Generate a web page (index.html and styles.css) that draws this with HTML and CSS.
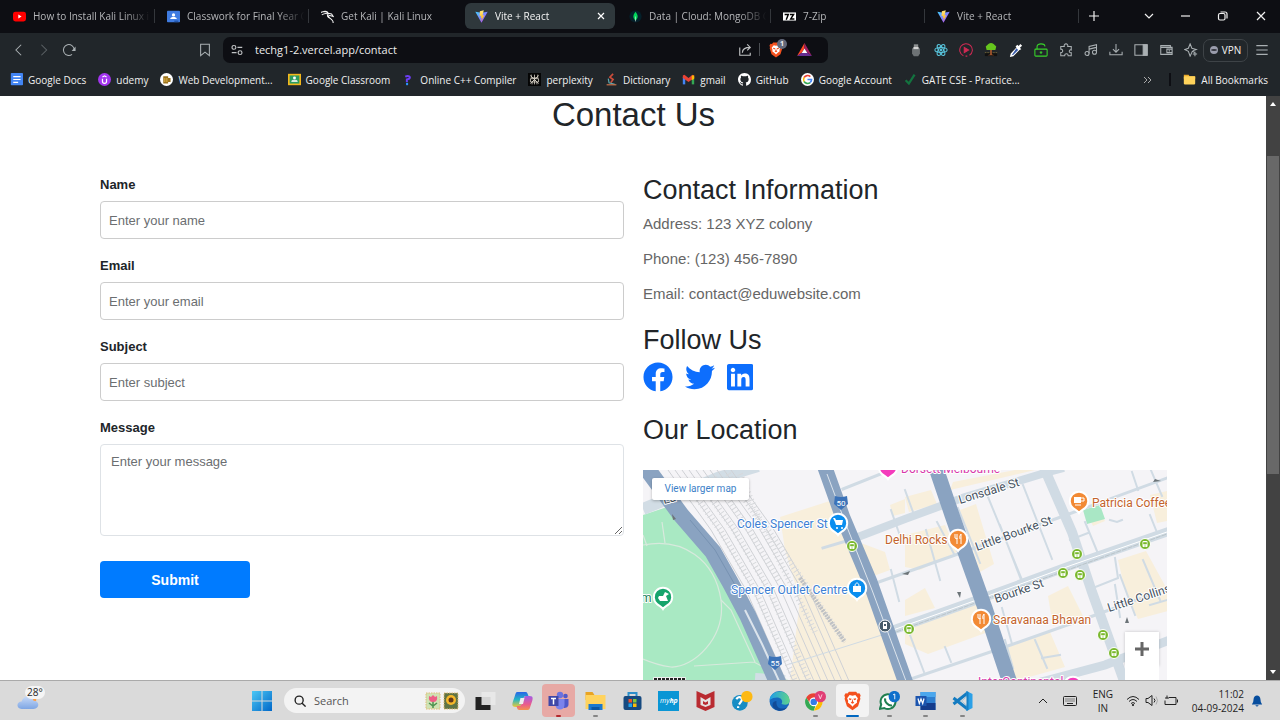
FILE: index.html
```html
<!DOCTYPE html>
<html lang="en">
<head>
<meta charset="utf-8">
<meta name="viewport" content="width=device-width, initial-scale=1">
<title>Contact Us</title>
<link rel="stylesheet" href="styles.css">
</head>
<body>
<svg class="defs" aria-hidden="true">
  <defs>
    <linearGradient id="vite-a" x1="0" y1="0" x2="1" y2="1"><stop offset="0" stop-color="#41d1ff"/><stop offset="1" stop-color="#bd34fe"/></linearGradient>
    <linearGradient id="vite-b" x1="0" y1="0" x2="0" y2="1"><stop offset="0" stop-color="#ffea83"/><stop offset="1" stop-color="#ffa800"/></linearGradient>
    <linearGradient id="win" x1="0" y1="0" x2="1" y2="1"><stop offset="0" stop-color="#4cc8f5"/><stop offset="1" stop-color="#0067c8"/></linearGradient>
    <linearGradient id="edge-a" x1="0" y1="0" x2="1" y2="0"><stop offset="0" stop-color="#1e9de8"/><stop offset="1" stop-color="#5fd38a"/></linearGradient>
    <linearGradient id="cloud" x1="0" y1="0" x2="0" y2="1"><stop offset="0" stop-color="#c9dbf8"/><stop offset="1" stop-color="#7ea6e4"/></linearGradient>
    <linearGradient id="cop-a" x1="0" y1="0" x2="0" y2="1"><stop offset="0" stop-color="#2764e8"/><stop offset=".5" stop-color="#25b6c4"/><stop offset="1" stop-color="#ecc936"/></linearGradient>
    <linearGradient id="cop-b" x1="0" y1="0" x2="0" y2="1"><stop offset="0" stop-color="#a45be6"/><stop offset=".6" stop-color="#ea5b8c"/><stop offset="1" stop-color="#f4914e"/></linearGradient>
    <symbol id="vite" viewBox="0 0 16 16"><path fill="url(#vite-a)" d="M.4 2.2 8 15.6 15.6 2.2 8.2 3.4z"/><path fill="url(#vite-b)" d="M10.8.4 6 1.4 5.6 7.6l2-.4-.6 2.6 1.5-.4-1 4.6 4-7.6-2.2.4z"/></symbol>
    <symbol id="brave" viewBox="0 0 24 28"><path fill="#f4511e" d="M7 1h10l2 2.400 2.600-.2L23.400 6l-.9 3 .6 2-3.300 10.400L12 27 4.200 21.400.9 11l.6-2-.9-3 1.800-2.800 2.600.2z"/><path fill="#fff" d="m12 6.500 4-1 3.500 4.500-1.500 4 .5 2-4.500 3.500L12 22l-2-2.500L5.500 16l.5-2-1.500-4L8 5.500z"/><path fill="#f4511e" d="m7 10 4 1-1.500 2L7 12zm10 0-4 1 1.500 2 2.500-1zM12 11l1 4 1.500 1.500L12 18l-2.500-1.500L11 15z"/></symbol>
    <symbol id="tram" viewBox="-6 -6 12 12"><circle r="5.500" fill="#7ab82e" stroke="#fff"/><rect x="-2.500" y="-3" width="5" height="6" rx="1" fill="#fff"/><path d="M-1.500-1.500h3v1.500h-3zM-1 2h2" fill="#7ab82e" stroke="#7ab82e" stroke-width=".6"/></symbol>
    <path id="pin" d="M0 12C-1.500 9.500-4 9-6 7A9.200 9.200 0 1 1 6 7C4 9 1.500 9.500 0 12z"/>
  </defs>
</svg>

<header class="browser">
  <div class="tabs">
    <button class="tab"><svg class="fav" viewBox="0 0 16 16"><rect y="2" width="16" height="12" rx="3" fill="#f00"/><path fill="#fff" d="m6.500 5.500 4 2.500-4 2.500z"/></svg><span>How to Install Kali Linux in</span></button>
    <button class="tab"><svg class="fav" viewBox="0 0 16 16"><rect y="1" width="16" height="14" rx="1" fill="#3f7be0"/><circle cx="8" cy="6" r="2" fill="#fff"/><path fill="#fff" d="M4 11c0-3 8-3 8 0z"/><path fill="#2457ac" d="M9 13h5v2H9z"/></svg><span>Classwork for Final Year C</span></button>
    <button class="tab last-before"><svg class="fav" viewBox="0 0 16 16" fill="none" stroke="#f4f4f4" stroke-width="1.300"><path d="M0 3c4-2 7-1 9 1M1 6c3-2 6-2 8-1M3 2c3-1 5 0 6 2l4 1 2 3-3-1c-3-1-4 1-1 3s4 3 4 6M9 5c-2 2-1 4 2 5"/></svg><span>Get Kali | Kali Linux</span></button>
    <button class="tab active"><svg class="fav"><use href="#vite"/></svg><span>Vite + React</span><svg class="tab-close" viewBox="0 0 8 8"><path d="m1 1 6 6M7 1 1 7"/></svg></button>
    <button class="tab"><svg class="fav" viewBox="0 0 16 16"><circle cx="8" cy="8" r="7.500" fill="#04202a"/><path fill="#00d65b" d="M8 2c4 5 3 8 0 11-3-3-4-6 0-11z"/><path stroke="#eee" stroke-width=".7" d="M8 8v6"/></svg><span>Data | Cloud: MongoDB C</span></button>
    <button class="tab"><svg class="fav" viewBox="0 0 16 16"><path fill="#fff" d="M0 3h16v10H0z"/><path fill="none" stroke="#000" stroke-width="1.800" d="M2 5.500h4.500L4 12M8.500 5.500H13L9.500 11H14"/></svg><span>7-Zip</span></button>
    <button class="tab"><svg class="fav"><use href="#vite"/></svg><span>Vite + React</span></button>
    <button class="wbtn plus" aria-label="New tab"><svg viewBox="0 0 12 12"><path d="M6 1v10M1 6h10"/></svg></button>
    <div class="window-buttons">
      <button class="wbtn caret" aria-label="Search tabs"><svg viewBox="0 0 12 12"><path d="m2 4 4 4 4-4"/></svg></button>
      <button class="wbtn" aria-label="Minimize"><svg viewBox="0 0 12 12"><path d="M2 6h9"/></svg></button>
      <button class="wbtn" aria-label="Restore"><svg viewBox="0 0 12 12"><rect x="1.500" y="3.500" width="6.500" height="6.500" rx="1.500"/><path d="M3.500 2H8q2 0 2 2v4.500"/></svg></button>
      <button class="wbtn" aria-label="Close"><svg viewBox="0 0 12 12"><path d="m2 2 8 8M10 2l-8 8"/></svg></button>
    </div>
  </div>

  <div class="toolbar">
    <nav class="nav">
      <button class="tool" aria-label="Back"><svg viewBox="0 0 16 16"><path d="M10.500 2 4.500 8l6 6"/></svg></button>
      <button class="tool dim" aria-label="Forward"><svg viewBox="0 0 16 16"><path d="m5 2 6 6-6 6"/></svg></button>
      <button class="tool" aria-label="Reload"><svg viewBox="0 0 16 16"><path d="M11.500 13A6.200 6.200 0 1 1 14 7.500"/><path fill="currentColor" d="M15.500 4v5H11z" stroke="none"/></svg></button>
    </nav>
    <button class="tool" aria-label="Bookmark"><svg viewBox="0 0 16 16"><path d="M3 1.500h10v13L8 10.500l-5 4z"/></svg></button>
    <div class="address">
      <svg class="site" viewBox="0 0 16 16"><circle cx="4.500" cy="5" r="2.200"/><circle cx="11.500" cy="11" r="2.200"/><path d="M8.500 5H14M2 11h5.500"/></svg>
      <input aria-label="Address" value="techg1-2.vercel.app/contact">
      <svg class="share" viewBox="0 0 16 16"><path d="M2 5v9h12v-3M5 11c0-4 3-6 9-6M10.500 1.500 14 5l-3.500 3.500"/></svg>
      <i class="bar"></i>
      <span class="shield"><svg><use href="#brave"/></svg><b>1</b></span>
      <svg class="bat" viewBox="0 0 16 14"><path fill="#ff4724" d="M8 0v6l-3 4.500L0 14z"/><path fill="#9e1f63" d="m8 0 8 14-5-3.500L8 6z"/><path fill="#662d91" d="M0 14h16l-5-3.500H5z"/><path fill="#fff" d="m8 6 3 4.700H5z"/></svg>
    </div>
    <div class="extensions">
      <button class="tool" aria-label="Extension"><svg viewBox="0 0 16 16" stroke="none"><path fill="#8d9092" d="M5.500 1.500h5v3h-5z"/><path fill="#6d7275" d="M3.500 6h9v6l-2 3h-5l-2-3z"/><path fill="#d4d4d4" d="M5 4.500h6V7H5z"/></svg></button>
      <button class="tool" aria-label="React tools"><svg viewBox="0 0 16 16" stroke="#58c4dc"><g><ellipse cx="8" cy="8" rx="7" ry="2.800"/><ellipse cx="8" cy="8" rx="7" ry="2.800" transform="rotate(60 8 8)"/><ellipse cx="8" cy="8" rx="7" ry="2.800" transform="rotate(120 8 8)"/></g><circle cx="8" cy="8" r="1" fill="#58c4dc"/></svg></button>
      <button class="tool" aria-label="Video speed"><svg viewBox="0 0 16 16" stroke="#cf2a53"><path d="M5 14.500A7.200 7.200 0 1 1 12 14"/><path fill="#cf2a53" d="m6 5 5 3-5 3zM7.500 15h2"/></svg></button>
      <button class="tool" aria-label="Forest"><svg viewBox="0 0 16 16" stroke="none"><path fill="#111" d="M1 11h14v4H1z"/><path fill="#a4572c" d="M7 8h2v5l3 1H4l3-1z"/><path fill="#65c51d" d="M5 1q3-2 6 0l3 3-1 4H3L2 4z"/><path stroke="#b9a04f" stroke-width=".8" stroke-dasharray="1 1" d="M1 11h5m4 0h5"/></svg></button>
      <button class="tool" aria-label="Colour picker"><svg viewBox="0 0 16 16" stroke="none"><path fill="#fff" d="M9.500 2 11 3.500 13 1l2 2-2.500 2.500L14 7l-2 1L5 15l-4 1 1-4 6.500-7L7.500 4z"/><path fill="#3558a8" d="m8.500 6 2 2L5 13.500 3 14z"/></svg></button>
      <button class="tool" aria-label="Unlock"><svg viewBox="0 0 16 16" stroke="#38d42a" stroke-width="1.700"><rect x="1" y="7" width="14" height="8" rx="1"/><path d="M3.500 7V4c0-4 9-4 9 0M8 9.500v3M6.500 10.500h3"/></svg></button>
      <button class="tool" aria-label="Extensions"><svg viewBox="0 0 16 16"><path d="M2 4h4c-1-4 5-4 4 0h4v4c-3-1-3 4 0 3v3.500h-3.500c0-3-4-3-4 0H2V11c3 0 3-4 0-4z"/></svg></button>
      <button class="tool" aria-label="Media"><svg viewBox="0 0 16 16"><circle cx="3.500" cy="12" r="2.300"/><circle cx="12" cy="10.500" r="2.300"/><path d="M5.800 12V4l8.500-2v8.500M6 7l8-2"/></svg></button>
      <button class="tool" aria-label="Downloads"><svg viewBox="0 0 16 16"><path d="M8 1v9M4.500 7 8 10.500 11.500 7M1 10v3.500h14V10"/></svg></button>
      <button class="tool" aria-label="Sidebar"><svg viewBox="0 0 16 16"><path d="M1 2h14v12H1z"/><path fill="#aab0b3" d="M10.500 2H15v12h-4.500z"/></svg></button>
      <button class="tool" aria-label="Wallet"><svg viewBox="0 0 16 16"><path d="M13 5V3H2v10h13V5H2M15 7H9v4h6M11 9h1.500"/></svg></button>
      <button class="tool" aria-label="Leo"><svg viewBox="0 0 16 16"><path d="M12 10.500 9.500 9.500 7 15l-2-5.500L1 7.500 5 6l2-5 2 5 5 1.500-4 1.500M12.500 10v5M10 12.500h5"/></svg></button>
    </div>
    <button class="vpn"><i></i>VPN</button>
    <button class="tool menu" aria-label="Menu"><svg viewBox="0 0 16 16"><path d="M1.500 3h13M1.500 8h13M1.500 13h13"/></svg></button>
  </div>

  <nav class="bookmarks">
    <a href="#"><svg viewBox="0 0 16 16"><rect x="1" width="15" height="15" rx="1" fill="#4285f4"/><path stroke="#fff" stroke-width="1.500" d="M4 4.500h9M4 8h9M4 11.500h6"/></svg>Google Docs</a>
    <a href="#"><svg viewBox="0 0 16 16"><circle cx="8" cy="8" r="8" fill="#a435f0"/><path fill="none" stroke="#fff" stroke-width="1.500" d="M5.500 7v3.500c0 3 5 3 5 0V7M5.500 5 8 3.500 10.500 5"/></svg>udemy</a>
    <a href="#"><svg viewBox="0 0 16 16"><circle cx="8" cy="8" r="8" fill="#fff"/><path fill="#9b721d" d="M4 4h6v9H4zM10 6h3v5h-3z"/><path fill="#f0c75b" d="M5.500 6h1v5h-1zm2.500 0h1v5H8z"/></svg>Web Development...</a>
    <a href="#" class="room"><svg viewBox="0 0 16 16"><path fill="#f4b81c" d="M0 1h16v14H0z"/><path fill="#2c9c61" d="M2 3h12v10H2z"/><circle cx="8" cy="6" r="1.800" fill="#fff"/><path fill="#d6eddd" d="M4 11c0-4 8-4 8 0z"/></svg>Google Classroom</a>
    <a href="#"><svg viewBox="0 0 16 16"><path fill="none" stroke="#6d3df5" stroke-width="2.500" d="M4 4.500c4-2 7 0 5 2.500L6 8v3"/><path fill="#2b94ff" d="M5 12h2.500v3H5z"/></svg>Online C++ Compiler</a>
    <a href="#"><svg viewBox="0 0 16 16"><path fill="#050505" d="M0 0h16v16H0z"/><path fill="none" stroke="#d8d2c6" d="M8 2v12M3 3l10 10M13 3 3 13M4 2v4h8V2M3 7h10v4H3zM5 14v-3l3-3 3 3v3"/></svg>perplexity</a>
    <a href="#"><svg viewBox="0 0 16 16" fill="none"><path stroke="#cd4d3b" stroke-width="2" d="m10 1-4 4 4 3-3 4"/><path stroke="#5fa7ae" stroke-width="1.500" d="m4 7 1 5 7 2"/><path stroke="#c8704a" stroke-width="1.500" d="M2 14.500h12"/></svg>Dictionary</a>
    <a href="#"><svg viewBox="0 0 16 16"><path fill="#4285f4" d="M1 5h3v9H1z"/><path fill="#34a853" d="M12 5h3v9h-3z"/><path fill="#ea4335" d="m1 3 2-1 5 4 5-4 2 1v3l-7 5-7-5z"/><path fill="#fbbc04" d="M12 3h3v4l-3 2z"/></svg>gmail</a>
    <a href="#"><svg viewBox="0 0 16 16"><path fill="#fff" d="M8 0C3.580 0 0 3.580 0 8c0 3.540 2.290 6.530 5.470 7.590.4.07.55-.17.55-.38 0-.19-.01-.82-.01-1.490-2.010.37-2.530-.49-2.690-.94-.09-.23-.48-.94-.82-1.130-.28-.15-.68-.52-.01-.53.63-.01 1.080.58 1.230.82.72 1.210 1.870.87 2.330.66.07-.52.28-.87.51-1.070-1.780-.2-3.640-.89-3.640-3.950 0-.87.31-1.590.82-2.150-.08-.2-.36-1.020.08-2.120 0 0 .67-.21 2.200.82.64-.18 1.320-.27 2-.27s1.360.09 2 .27c1.530-1.040 2.200-.82 2.200-.82.44 1.100.16 1.920.08 2.120.51.56.82 1.270.82 2.150 0 3.070-1.870 3.750-3.650 3.950.29.25.54.73.54 1.480 0 1.070-.01 1.930-.01 2.200 0 .21.15.46.55.38A8.010 8.010 0 0 0 16 8c0-4.420-3.580-8-8-8z"/></svg>GitHub</a>
    <a href="#"><svg viewBox="0 0 16 16"><circle cx="8" cy="8" r="8" fill="#fff"/><g fill="none" stroke-width="2"><path stroke="#ea4335" d="M3.800 5.500A5 5 0 0 1 11.500 4.500"/><path stroke="#fbbc04" d="M3.800 5.500a5 5 0 0 0 0 5"/><path stroke="#34a853" d="M3.800 10.500a5 5 0 0 0 7.500 1.200"/><path stroke="#4285f4" d="M11.300 11.700A5 5 0 0 0 13 8H8"/></g></svg>Google Account</a>
    <a href="#"><svg viewBox="0 0 16 16"><path fill="none" stroke="#13733f" stroke-width="2.800" d="m2 9 4 4 7-11"/></svg>GATE CSE - Practice...</a>
    <button class="more" aria-label="More bookmarks"><svg viewBox="0 0 10 10"><path d="m1 2 3 3-3 3M5 2l3 3-3 3"/></svg></button>
    <i class="split"></i>
    <a href="#" class="all"><svg viewBox="0 0 16 16"><path fill="#e9a92a" d="M1 2h6l1 2h7v3H1z"/><rect x="1" y="4" width="14" height="10" rx="1" fill="#ffd35b"/></svg>All Bookmarks</a>
  </nav>
</header>

<div class="viewport">
  <main class="page">
    <h1>Contact Us</h1>
    <div class="columns">
      <form class="form">
        <div class="field"><label for="name">Name</label><input id="name" type="text" placeholder="Enter your name"></div>
        <div class="field"><label for="email">Email</label><input id="email" type="email" placeholder="Enter your email"></div>
        <div class="field"><label for="subject">Subject</label><input id="subject" type="text" placeholder="Enter subject"></div>
        <div class="field"><label for="message">Message</label><textarea id="message" placeholder="Enter your message"></textarea></div>
        <button class="submit" type="button">Submit</button>
      </form>
      <section class="info">
        <h2>Contact Information</h2>
        <p>Address: 123 XYZ colony</p>
        <p>Phone: (123) 456-7890</p>
        <p>Email: contact@eduwebsite.com</p>
        <h2 class="follow">Follow Us</h2>
        <div class="social">
          <a href="#" aria-label="Facebook"><svg viewBox="0 0 512 512"><path d="M504 256C504 119 393 8 256 8S8 119 8 256c0 123.780 90.690 226.380 209.250 245V327.690h-63V256h63v-54.640c0-62.150 37-96.480 93.670-96.480 27.140 0 55.520 4.840 55.520 4.840v61h-31.280c-30.800 0-40.410 19.120-40.410 38.730V256h68.780l-11 71.690h-57.780V501C413.310 482.380 504 379.780 504 256z"/></svg></a>
          <a href="#" aria-label="Twitter"><svg viewBox="0 0 512 512"><path d="M459.370 151.716c.325 4.548.325 9.097.325 13.645 0 138.720-105.583 298.558-298.558 298.558-59.452 0-114.680-17.219-161.137-47.106 8.447.974 16.568 1.299 25.340 1.299 49.055 0 94.213-16.568 130.274-44.832-46.132-.975-84.792-31.188-98.112-72.772 6.498.974 12.995 1.624 19.818 1.624 9.421 0 18.843-1.300 27.614-3.573-48.081-9.747-84.143-51.980-84.143-102.985v-1.299c13.969 7.797 30.214 12.670 47.431 13.319-28.264-18.843-46.781-51.005-46.781-87.391 0-19.492 5.197-37.360 14.294-52.954 51.655 63.675 129.300 105.258 216.365 109.807-1.624-7.797-2.599-15.918-2.599-24.040 0-57.828 46.782-104.934 104.934-104.934 30.213 0 57.502 12.670 76.670 33.137 23.715-4.548 46.456-13.320 66.599-25.340-7.798 24.366-24.366 44.833-46.132 57.827 21.117-2.273 41.584-8.122 60.426-16.243-14.292 20.791-32.161 39.308-52.628 54.253z"/></svg></a>
          <a href="#" aria-label="LinkedIn"><svg viewBox="0 0 448 512"><path d="M416 32H31.900C14.300 32 0 46.500 0 64.300v383.400C0 465.500 14.300 480 31.900 480H416c17.600 0 32-14.500 32-32.300V64.300c0-17.800-14.400-32.300-32-32.300zM135.400 416H69V202.200h66.500V416zm-33.200-243c-21.300 0-38.500-17.300-38.500-38.500S80.900 96 102.200 96c21.200 0 38.500 17.300 38.500 38.500 0 21.300-17.200 38.500-38.500 38.500zm282.100 243h-66.400V312c0-24.800-.5-56.700-34.500-56.700-34.600 0-39.900 27-39.900 54.900V416h-66.400V202.200h63.700v29.200h.9c8.900-16.800 30.600-34.500 62.900-34.500 67.200 0 79.700 44.300 79.700 101.900V416z"/></svg></a>
        </div>
        <h2>Our Location</h2>
        <div class="map">
          <svg class="map-art" viewBox="643 470 524 211" preserveAspectRatio="xMinYMin slice">
            <path fill="#f5f4f7" d="M643 470h524v211H643z"/>
            <g fill="#f8efdc">
              <path d="M780 517 836 499 880 620 905 681H790L800 600 785 550z"/>
              <path d="M853 540 885 552 890 570 868 578zM890 505l15-6v14l-12 3zM905 497l26-7 6 14-28 8zM905 535l40-10 12 27-37 18-15-3z"/>
              <path d="M905 600l20-12 10 20-30 8zM905 630l75-28 8 30-60 22-23-10z"/>
              <path d="M950 490l85-20h-20l-62 12zM960 510l16-6 18 60-14 8zM1085 510l12-5 8 16-12 5zM1048 596l20-10 15 30-30 10zM1000 650l50-18 15 35-50 14zM1118 560l28-9 22 40v20l-30 8-12-25zM1150 495l17-4v30l-10 2z"/>
            </g>
            <path fill="#a9e9c3" d="m643 515 30-10 30 43 25 42 20 36 20 55H643z"/>
            <path fill="#a9e7c5" d="m1083 510 17-5 5 14-18 5z"/>
            <g fill="none" stroke="#d8e9dd" stroke-width="1.200"><path d="M643 545c40-8 72 15 78 55 5 38-28 68-50 67q-14-2-28-8"/><path d="m662 522 3 21m56 57 10 10 24 52m-61 4 60-4 35 19M643 535l4 11"/></g>
            <g fill="none" stroke="#d2dde5" stroke-width="12"><path d="m643 509 75-31 40-12M785 681l-30-2"/></g>
            <g class="rails">
              <path id="rail" d="m668 470 43 60 35 60 40 91"/>
              <use href="#rail" x="7"/><use href="#rail" x="14"/><use href="#rail" x="21"/><use href="#rail" x="28"/><use href="#rail" x="35"/><use href="#rail" x="42"/><use href="#rail" x="49"/><use href="#rail" x="56"/><use href="#rail" x="63"/>
            </g>
            <g class="ties"><path d="m684 480 36 50 35 60 40 91M698 480l36 50 35 60 40 91M714 478l36 54 30 50M728 474l32 48 30 60 25 50M740 474l18 42 28 40 58 85"/></g>
            <path fill="none" stroke="#bfc1c4" stroke-width="4" stroke-dasharray="2 1" d="m800 578 45 64"/>
            <g fill="none" stroke="#d0dbe4" stroke-linecap="square">
              <path stroke-width="8" d="m850 540 55-21 60-22 80-24 15-4"/><path stroke-width="3" d="m823 548 40-12M843 489l45-18M876 583l82-29 100-36 109-40"/>
              <path stroke-width="9" d="m893 630 95-34 84-31 95-33"/><path stroke-width="1" d="m790 664 95-30"/>
              <path stroke-width="3" d="m905 681 100-34 85-30 77-28"/><path stroke-width="9" d="m1045 681 60-16 62-24"/>
              <path stroke-width="10" d="m1045 470 27 62 20 60 32 89"/>
              <path stroke-width="2" d="m988 497 34 83M1023 485l29 74M1000 525l23 60M905 490l8 22M937 522l17 32M926 530l14 50M958 508l22 55M1005 640l8 28M1035 640l12 28M945 647l6 15M910 635l14 37M1085 522l14 34M1115 585l5 32M1143 560l17 40M1132 472l6 18M1150 468l12 28M1093 588l25-10-3-20M1070 540l18-7M1110 520l7 2 5-2M1150 515l8 20M891 510l8 23M891 570l8 31M1060 655l-18 3M1002 608l10 36M1120 575l15 40M1150 605l17-5"/>
            </g>
            <path fill="none" stroke="#fff" stroke-width="1" d="m893 630 95-34 84-31 95-33"/>
            <path fill="none" stroke="#bac4c9" stroke-width="1" stroke-dasharray="5 1" d="m885 636 104-38 84-30 94-34"/>
            <g fill="none" stroke="#8aa3c1">
              <path stroke-width="17" d="m642 462 39 53 32 37 17 30 18 34 33 74"/>
              <path stroke-width="15" d="m823 462 20 56 27 64 39 110M934 462l18 53 13 37 20 56 28 84"/>
            </g>
            <g fill="none" stroke="#dce4ec"><path d="m827 474 18 48 27 68 34 91"/><path stroke-width="2" d="m745 610 17 34 17 37"/><path stroke="#7792b2" d="m690 520 25 30 20 35"/></g>
            <g fill="#6c7478"><path d="m672 514 4 5-3 1zM902 574l8-3-2 4zM960 598l-3-6h4zM1127 617l2 6h-4zM1153 482l8-1-6-2z"/></g>
            <use href="#tram" x="846" y="540" width="12" height="12"/><use href="#tram" x="903" y="623" width="12" height="12"/><use href="#tram" x="1071" y="548" width="12" height="12"/><use href="#tram" x="1057" y="567" width="12" height="12"/><use href="#tram" x="1074" y="569" width="12" height="12"/><use href="#tram" x="1139" y="538" width="12" height="12"/><use href="#tram" x="1097" y="629" width="12" height="12"/><use href="#tram" x="1108" y="647" width="12" height="12"/>
            <g><circle cx="885" cy="626" r="6" fill="#465a69" stroke="#fff"/><path fill="#fff" d="M883 622h4v7h-4z"/><path fill="#465a69" d="M884 624h2v2h-2z"/></g>
            <g fill="#3c73b9"><path d="M835 496q6 2 12 0l1 8-7 6-7-6zM769 656q6 2 12 0l1 8-7 6-7-6z"/></g>
            <g stroke="#fff" stroke-width="2">
              <use href="#pin" x="838" y="523" fill="#0a8eef"/><use href="#pin" x="857" y="588" fill="#0a8eef"/><use href="#pin" x="663" y="597" fill="#16a46c"/>
              <use href="#pin" x="958" y="539" fill="#f28a35"/><use href="#pin" x="981" y="619" fill="#f28a35"/><use href="#pin" x="1079" y="501" fill="#f28a35"/>
              <use href="#pin" x="888" y="467" fill="#f43cbc"/><use href="#pin" x="1073" y="686" fill="#f43cbc"/>
            </g>
            <g fill="#fff"><path d="M833 518h2l1 2h7l-1 5h-6l-1-3zM853 586h8v6h-8zM1074 497h7v6h-7zM659 596h4l2-4 4 2-3 2 2 5h-8l-2-3zM885 468h7v2h-7z"/><circle cx="837" cy="528" r="1"/><circle cx="842" cy="528" r="1"/></g>
            <g fill="none" stroke="#fff"><path d="M855 586c0-4 4-4 4 0M1081 498h3v3h-3M1075 505h6M955 534v4m2-4v5m0 0-2-1m2 0v6m4 0v-10q-2 2-1 5M978 614v4m2-4v5m0 0-2-1m2 0v6m4 0v-10q-2 2-1 5"/></g>
            <g class="place">
              <g class="blue"><text x="737" y="528">Coles Spencer St</text><text x="731" y="594">Spencer Outlet Centre</text></g>
              <g class="orange"><text x="885" y="544">Delhi Rocks</text><text x="1092" y="507">Patricia Coffee</text><text x="993" y="624">Saravanaa Bhavan</text></g>
              <g class="pink"><text x="901" y="473">Dorsett Melbourne</text><text x="978" y="686">InterContinental</text></g>
              <text class="green" x="641" y="602">m</text>
              <g class="street"><text transform="translate(960 504) rotate(-17)">Lonsdale St</text><text transform="translate(977 551) rotate(-20)">Little Bourke St</text><text transform="translate(996 603) rotate(-19)">Bourke St</text><text transform="translate(1109 612) rotate(-18)">Little Collins St</text><text transform="translate(664 504) rotate(-14)">La Trobe</text></g>
              <g class="shield-no"><text x="841" y="506">50</text><text x="775" y="666">55</text></g>
            </g>
            <g><rect x="653" y="677" width="33" height="6" rx="1" fill="#eee"/><path stroke="#222" stroke-width="2" stroke-dasharray="3 1" d="M654 679h31"/></g>
          </svg>
          <a class="larger" href="#">View larger map</a>
          <button class="zoom" type="button" aria-label="Zoom in"><svg viewBox="0 0 16 16"><path d="M8 1v14M1 8h14"/></svg></button>
        </div>
      </section>
    </div>
  </main>
  <div class="scrollbar"><i class="up"></i><i class="thumb"></i><i class="down"></i></div>
</div>

<footer class="taskbar">
  <div class="weather"><svg viewBox="0 0 24 16"><circle cx="17" cy="5" r="4" fill="#ff9d42"/><path fill="url(#cloud)" d="M5 15c-6 0-6-8 0-8 2-8 12-8 13-1 7 0 7 9 0 9z"/></svg><span>28°</span></div>
  <button class="start" aria-label="Start"><svg viewBox="0 0 20 20"><path fill="url(#win)" d="M0 0h9.500v9.500H0zM10.500 0H20v9.500h-9.500zM0 10.500h9.500V20H0zM10.500 10.500H20V20h-9.500z"/></svg></button>
  <label class="search"><svg viewBox="0 0 14 14"><circle cx="6" cy="6" r="4.700"/><path d="m9.500 9.500 4 4"/></svg><input type="search" placeholder="Search">
    <svg class="stamps" viewBox="0 0 34 20"><g stroke="#e3bb79" stroke-dasharray="1.500 1"><path fill="#cfe3b4" d="M1 2h14v16H1z"/><path fill="#5f7445" d="M19 2h14v16H19z"/></g><path stroke="#4f9350" stroke-width="1.500" fill="none" d="M8 10v7M4 12l4 3 4-3"/><path fill="#ee5f86" d="m4 5 2 1 2-2 2 2 2-1q1 6-4 6T4 5z"/><circle cx="26" cy="9" r="5" fill="#f6b729"/><circle cx="26" cy="9" r="2.500" fill="#62381b"/></svg></label>
  <div class="apps">
    <button class="app" aria-label="Task view"><svg viewBox="0 0 20 20"><path fill="#222" d="M0 6h15v13H0z"/><path fill="#e9e9e9" opacity=".9" d="M6 1h14v13H6z"/></svg></button>
    <button class="app" aria-label="Copilot"><svg viewBox="0 0 20 20"><path fill="url(#cop-a)" d="M5 1h8c2 0 2 2 3 4h-3c-3 0-4 11-6 11H3c-5 0-3-4-1-10 1-3 1-5 3-5z"/><path fill="url(#cop-b)" d="M15 19H7c-2 0-2-1-3-4h3c3 0 4-10 6-10h4c5 0 3 4 1 10-1 3-1 4-3 4z"/><path fill="#eee" d="M8 7h4l-1.500 6h-4z"/></svg></button>
    <button class="app alert open" aria-label="Teams"><svg viewBox="0 0 20 20"><circle cx="17" cy="5" r="2.300" fill="#5059c9"/><circle cx="11.500" cy="4" r="3.200" fill="#6a72df"/><path fill="#5059c9" d="M14 8h6v5c0 3-2 4-5 4z"/><path fill="#7b83eb" d="M7 8h9v6c0 6-9 6-9 0z"/><path fill="#4048a8" d="M0 5h10v10H0z"/><path stroke="#fff" stroke-width="1.500" fill="none" d="M2.500 7.500h5M5 7.500v6"/></svg></button>
    <button class="app open" aria-label="File Explorer"><svg viewBox="0 0 20 20"><path fill="#e9a423" d="M0 1h7l2 3h10v5H0z"/><path fill="#ffd35e" d="M0 4h20v14H0z"/><path fill="#1b79cf" d="M3 13h14v6H3z"/><path fill="#0b57a4" d="M6 16h8v3H6z"/></svg></button>
    <button class="app" aria-label="Store"><svg viewBox="0 0 20 20"><path fill="none" stroke="#2c8fcb" stroke-width="2" d="M6 6V2h8v4"/><rect x="1" y="5" width="18" height="14" rx="2" fill="#174a80"/><path fill="#f1512a" d="M6 8h3.500v3.500H6z"/><path fill="#80c93c" d="M10.500 8H14v3.500h-3.500z"/><path fill="#20a4ed" d="M6 12.500h3.500V16H6z"/><path fill="#fbbc09" d="M10.500 12.500H14V16h-3.500z"/></svg></button>
    <button class="app myhp" aria-label="myHP"><span>my<b>hp</b></span></button>
    <button class="app" aria-label="McAfee"><svg viewBox="0 0 20 20"><path fill="#b92b31" d="m1 0 9 4 9-4v16l-9 4-9-4z"/><path fill="#e5e2e2" d="m5 6 5 3 5-3v8l-5 2-5-2z"/><path fill="#b92b31" d="m7.500 10 2.500 1.500 2.500-1.500v3L10 14l-2.500-1z"/></svg></button>
    <button class="app" aria-label="Help"><svg viewBox="0 0 24 22"><circle cx="9" cy="13" r="9" fill="#168dc4"/><path fill="none" stroke="#fff" stroke-width="2.500" d="M5 9c3-5 9-1 5 3l-2 3M7 17v2"/><circle cx="17" cy="6" r="6.500" fill="#fdb913"/></svg></button>
    <button class="app" aria-label="Edge"><svg viewBox="0 0 20 20"><circle cx="10" cy="10" r="10" fill="#1769be"/><path fill="url(#edge-a)" d="M0 9C1-1 17-3 20 8c1 5-3 7-8 5 3-6-5-9-12-4z"/><path fill="#114b97" d="M7 10c-1 8 6 9 11 6-5 7-15 3-15-2 0-3 2-4 4-4z"/></svg></button>
    <button class="app open" aria-label="Chrome"><svg viewBox="0 0 24 22"><circle cx="10" cy="12" r="10" fill="#fff"/><path fill="#e94335" d="M1.400 7A10 10 0 0 1 18.700 7H10L6 14z"/><path fill="#fbbc05" d="M18.700 7A10 10 0 0 1 10 22l4-8V7z"/><path fill="#34a853" d="M10 22A10 10 0 0 1 1.400 7L6 14.500l6 2z"/><circle cx="10" cy="12" r="5" fill="#fff"/><circle cx="10" cy="12" r="3.700" fill="#327de8"/><circle cx="17.500" cy="6" r="6.500" fill="#e13e75"/><path fill="none" stroke="#ffd7e5" d="m15.500 3.500 2 5 2-5"/></svg></button>
    <button class="app current" aria-label="Brave"><svg><use href="#brave"/></svg></button>
    <button class="app open" aria-label="WhatsApp"><svg viewBox="0 0 24 22"><path fill="#fff" stroke="#207f50" stroke-width="2.300" d="m1 20 1.500-5A8.500 8.500 0 1 1 6 19z"/><path fill="none" stroke="#207f50" stroke-width="2.300" d="M7 8c-1 4 4 9 8 8"/><circle cx="17.500" cy="6" r="6.500" fill="#0f70cb"/><path stroke="#fff" fill="none" d="m16 4 2-1v6"/></svg></button>
    <button class="app open" aria-label="Word"><svg viewBox="0 0 20 20"><path fill="#2e7fd0" d="M5 1h15v18H5z"/><path fill="#4ba7ed" d="M5 1h15v5H5z"/><path fill="#153c8c" d="M5 12h15v7H5z"/><path fill="#1c55ae" d="M0 5h11v10H0z"/><path fill="none" stroke="#fff" stroke-width="1.200" d="m2.500 7.500 1.300 5L5.500 8l1.700 4.500 1.300-5"/></svg></button>
    <button class="app open" aria-label="VS Code"><svg viewBox="0 0 20 20"><path fill="none" stroke="#147bc0" stroke-width="3" d="m1 7 14 11M1 13 15 2"/><path fill="#2ba0e7" d="m14 0 6 3v14l-6 3z"/><path fill="#1880c4" d="m14 0 2 1v18l-2 1V14L9 10l5-4z"/><path fill="#dedede" d="m14 6-5 4 5 4z"/></svg></button>
  </div>
  <div class="tray">
    <svg class="t12" viewBox="0 0 12 12"><path d="m2 8 4-4 4 4"/></svg>
    <svg class="t14" viewBox="0 0 14 12"><rect x=".5" y="2" width="13" height="9" rx="1"/><path stroke-dasharray="1 1" d="M2.500 4.500h9M2.500 6.500h9"/><path d="M4 9h6"/></svg>
    <div class="lang">ENG<br>IN</div>
    <svg class="t14" viewBox="0 0 14 12"><path d="M1 5q6-6 12 0M3 7q4-4 8 0M5 9q2-2 4 0"/><circle cx="7" cy="10.500" r=".7" fill="#222"/></svg>
    <svg class="t14" viewBox="0 0 14 12"><path d="M1 4h2l4-3v10L3 8H1zM9 4q2 2 0 4"/><path stroke="#aaa" d="M11 2q3 4 0 8"/></svg>
    <svg class="t14 batt" viewBox="0 0 14 12"><path d="M5 3h7v7H1V6M13.500 5v3M3 1v3M1 3.500h4"/></svg>
    <div class="clock">11:02<br>04-09-2024</div>
    <svg class="t12 bell" viewBox="0 0 12 14"><path d="M0 11q2-2 2-6c0-6 8-6 8 0q0 4 2 6zM4 12h4q-2 3-4 0z"/></svg>
  </div>
</footer>
</body>
</html>
```
FILE: styles.css
```css
* { box-sizing: border-box; }
body { margin: 0; height: 100vh; display: flex; flex-direction: column; overflow: hidden; background: #fff; color: #212529; font-family: "Liberation Sans", Arial, sans-serif; }
button { border: 0; padding: 0; background: none; color: inherit; font: inherit; }
a { color: inherit; text-decoration: none; }
svg { display: block; flex: none; }
.defs { position: absolute; width: 0; height: 0; }

/* browser frame */
.browser { flex: none; background: #21262a; color: #f1f1f1; font-family: "Open Sans", "Noto Sans", sans-serif; font-size: 10px; }
.tabs { display: flex; align-items: center; height: 33px; padding: 0 0 1px 1px; background: #0d0e13; }
.tab { position: relative; display: flex; align-items: center; gap: 7px; flex: 0 1 154px; min-width: 0; height: 26px; padding: 0 2px 0 12px; color: #b5b6b9; }
.tab::after { content: ""; position: absolute; right: 0; top: 6px; width: 1px; height: 14px; background: #34373c; }
.tab.last-before::after, .tab.active::after { display: none; }
.tab span { flex: 1; min-width: 0; overflow: hidden; white-space: nowrap; text-align: left; mask-image: linear-gradient(90deg, #000 75%, transparent 98%); }
.tab.active { flex-basis: 150px; margin: 0 2px; padding: 0 10px; border-radius: 6px; background: #2f383c; color: #f4f4f4; }
.fav { width: 13px; height: 13px; }
.tab-close { width: 8px; height: 8px; stroke: #fff; stroke-width: 1.2; }
.window-buttons { display: flex; margin-left: auto; }
.wbtn { display: grid; place-items: center; width: 38px; height: 32px; }
.wbtn.caret { width: 34px; }
.wbtn svg { width: 12px; height: 12px; fill: none; stroke: #f1f1f1; stroke-width: 1.2; }
.wbtn.plus { width: 30px; }
.toolbar { display: flex; align-items: center; height: 34px; }
.nav { display: flex; flex: 0 0 192px; padding-left: 6px; }
.tool { display: grid; place-items: center; flex: none; width: 25px; height: 26px; color: #aab0b3; }
.tool svg { width: 14px; height: 14px; fill: none; stroke: currentColor; stroke-width: 1.2; }
.tool svg[stroke] { stroke: revert-layer; }
.tool.dim { color: #5c6266; }
.address { display: flex; align-items: center; flex: 0 1 605px; min-width: 0; height: 26px; margin-left: 6px; padding: 0 16px 1px 7px; border-radius: 7px; background: #0d0e13; }
.address input { flex: 1; min-width: 0; margin-left: 11px; padding: 0; border: 0; outline: 0; background: none; color: #ececec; font: 11px "Open Sans", "Noto Sans", sans-serif; }
.site, .share { width: 14px; height: 14px; fill: none; stroke: #c0c2c4; stroke-width: 1.3; }
.bar { width: 1px; height: 13px; margin: 0 9px 0 7px; background: #4b4e53; }
.shield { position: relative; margin-right: 14px; }
.shield svg { width: 14px; height: 16px; }
.shield b { position: absolute; left: 8px; top: -3px; width: 10px; height: 10px; border-radius: 5px; background: #62687a; font-size: 7px; line-height: 10px; text-align: center; }
.bat { width: 15px; height: 13px; }
.extensions { display: flex; margin-left: auto; }
.vpn { display: flex; align-items: center; justify-content: center; gap: 4px; flex: none; width: 45px; height: 23px; border: 1px solid #3e4347; border-radius: 7px; }
.vpn i { width: 8px; height: 8px; border: 3px solid #9a9cac; border-width: 3px 1px; border-radius: 4px; background: #35373f; }
.menu { width: 28px; margin-right: 4px; }
.bookmarks { display: flex; align-items: center; gap: 12px; height: 29px; padding: 0 12px 4px 10px; white-space: nowrap; }
.bookmarks a { display: flex; align-items: center; gap: 5px; }
.bookmarks a svg { width: 13px; height: 13px; }
.bookmarks .room { margin-left: 3px; }
.more { margin-left: auto; }
.more svg { width: 10px; height: 10px; fill: none; stroke: #aaa; }
.split { width: 2px; height: 13px; margin-left: 4px; background: #0d0e13; }

/* page */
.viewport { display: flex; flex: 1; min-height: 0; }
.page { flex: 1; min-width: 0; overflow: hidden; padding: 0 99px 0 100px; }
h1, h2 { margin: 0; font-weight: 400; }
h1 { margin-bottom: 40px; font-size: 33px; line-height: 38px; text-align: center; }
h2 { font-size: 27px; line-height: 32px; }
.columns { display: grid; grid-template-columns: 1fr 1fr; gap: 19px; }
.field { display: flex; flex-direction: column; margin-bottom: 16px; }
.field label { margin-bottom: 5px; font-size: 13px; line-height: 22px; font-weight: 700; }
.field input, .field textarea { width: 100%; border: 1px solid #ccc; border-radius: 4px; background: #fff; color: #212529; font: 13px "Liberation Sans", Arial, sans-serif; }
.field input { height: 38px; padding: 0 8px; }
.field textarea { height: 92px; padding: 9px 10px; border-color: #dee2e6; resize: vertical; }
.field ::placeholder { color: #6b6e71; opacity: 1; }
.submit { width: 150px; height: 37px; margin-top: 9px; border-radius: 4px; background: #007bff; color: #fff; font-size: 14px; font-weight: 700; }
.info { min-width: 0; }
.info p { margin: 0 0 13px; color: #666; font-size: 15px; line-height: 22px; }
.info h2 + p { margin-top: 7px; }
.info .follow { margin-top: 19px; }
.social { display: flex; gap: 12px; margin: 6px 0 22px; }
.social svg { height: 30px; fill: #0d6efd; }
.map { position: relative; height: 211px; margin-top: 24px; overflow: hidden; }
.map-art { width: 100%; height: 100%; }
.rails { fill: none; stroke: #cfd1d5; stroke-width: 1; }
.ties { fill: none; stroke: #d6d8db; stroke-width: 6; stroke-dasharray: 1 3; }
.place { font: 12px Roboto, sans-serif; paint-order: stroke; stroke: #fff; stroke-width: 2px; stroke-linejoin: round; }
.blue { fill: #3d7fd4; }
.orange { fill: #c3632c; }
.pink { fill: #d838ab; }
.green { fill: #188058; }
.street { fill: #46525f; }
.shield-no { fill: #fff; stroke: none; font-size: 8px; text-anchor: middle; }
.larger { position: absolute; left: 9px; top: 8px; width: 97px; height: 22px; border-radius: 2px; background: #fff; box-shadow: 0 1px 3px #0004; color: #3c7fc8; font: 10px/22px Roboto, sans-serif; text-align: center; }
.zoom { position: absolute; right: 8px; top: 162px; display: grid; place-items: center; width: 34px; height: 34px; background: #fff; box-shadow: 0 15px #fff, 0 0 3px #0003; }
.zoom svg { width: 16px; height: 16px; stroke: #666; stroke-width: 3; }
.scrollbar { display: flex; flex-direction: column; align-items: center; flex: 0 0 14px; padding: 6px 0; background: #424242; }
.scrollbar .up, .scrollbar .down { border: 3px solid transparent; }
.scrollbar .up { border-top: 0; border-bottom: 4px solid #fff; }
.scrollbar .down { margin-top: auto; border-bottom: 0; border-top: 4px solid #fff; }
.thumb { width: 12px; height: 318px; margin-top: 50px; background: #686868; }

/* taskbar */
.taskbar { display: flex; align-items: center; flex: none; height: 40px; border-top: 1px solid #aaa; background: #dadada; color: #1e1e1e; font-family: "Open Sans", "Noto Sans", sans-serif; font-size: 10px; }
.weather { position: relative; flex: 1; padding: 4px 0 0 17px; }
.weather svg { width: 22px; height: 15px; }
.weather span { position: absolute; left: 25px; top: -5px; padding: 0 2px; border-radius: 7px; background: #f5f5f5; line-height: 13px; }
.start svg { width: 20px; height: 20px; }
.search { display: flex; align-items: center; width: 181px; height: 25px; margin-left: 12px; padding: 0 6px 0 10px; border-radius: 13px; background: #f3f3f3; }
.search > svg:first-child { width: 12px; height: 12px; fill: none; stroke: #222; stroke-width: 1.6; }
.search input { flex: 1; min-width: 0; margin-left: 8px; padding: 0; border: 0; outline: 0; background: none; font: 11px "Open Sans", "Noto Sans", sans-serif; }
.search ::placeholder { color: #555; opacity: 1; }
.search .stamps { width: 34px; height: 20px; }
.apps { display: grid; grid-template-columns: repeat(14, 1fr); justify-items: center; width: 514px; margin-left: 2px; margin-right: 1px; }
.app { position: relative; display: grid; place-items: center; width: 33px; height: 33px; border-radius: 4px; }
.app svg { width: 21px; height: 20px; }
.app.alert { background: #e7a9a5; }
.app.current { background: #f3f3f3; }
.open::after, .current::after { content: ""; position: absolute; bottom: 0; left: 14px; width: 5px; height: 2px; border-radius: 1px; background: #858585; }
.alert::after { background: #b3282d; }
.current::after { left: 10px; width: 13px; background: #0067c0; }
.myhp span { width: 21px; height: 20px; background: #0a96d5; color: #fff; font-size: 7px; line-height: 19px; font-style: italic; }
.tray { display: flex; align-items: center; flex: 0 0 298px; justify-content: flex-end; padding-right: 17px; line-height: 14px; }
.tray svg { fill: none; stroke: #222; }
.tray .t12 { width: 12px; height: 12px; }
.t14 { width: 14px; height: 13px; margin-left: 5px; }
.t12 + .t14 { margin-left: 14px; }
.lang { width: 22px; margin: 0 8px 0 15px; text-align: center; }
.lang + .t14 { margin-left: 4px; }
.clock { margin-left: 14px; text-align: right; }
.tray .bell { margin-left: 7px; fill: #064d9e; stroke: none; }
```
